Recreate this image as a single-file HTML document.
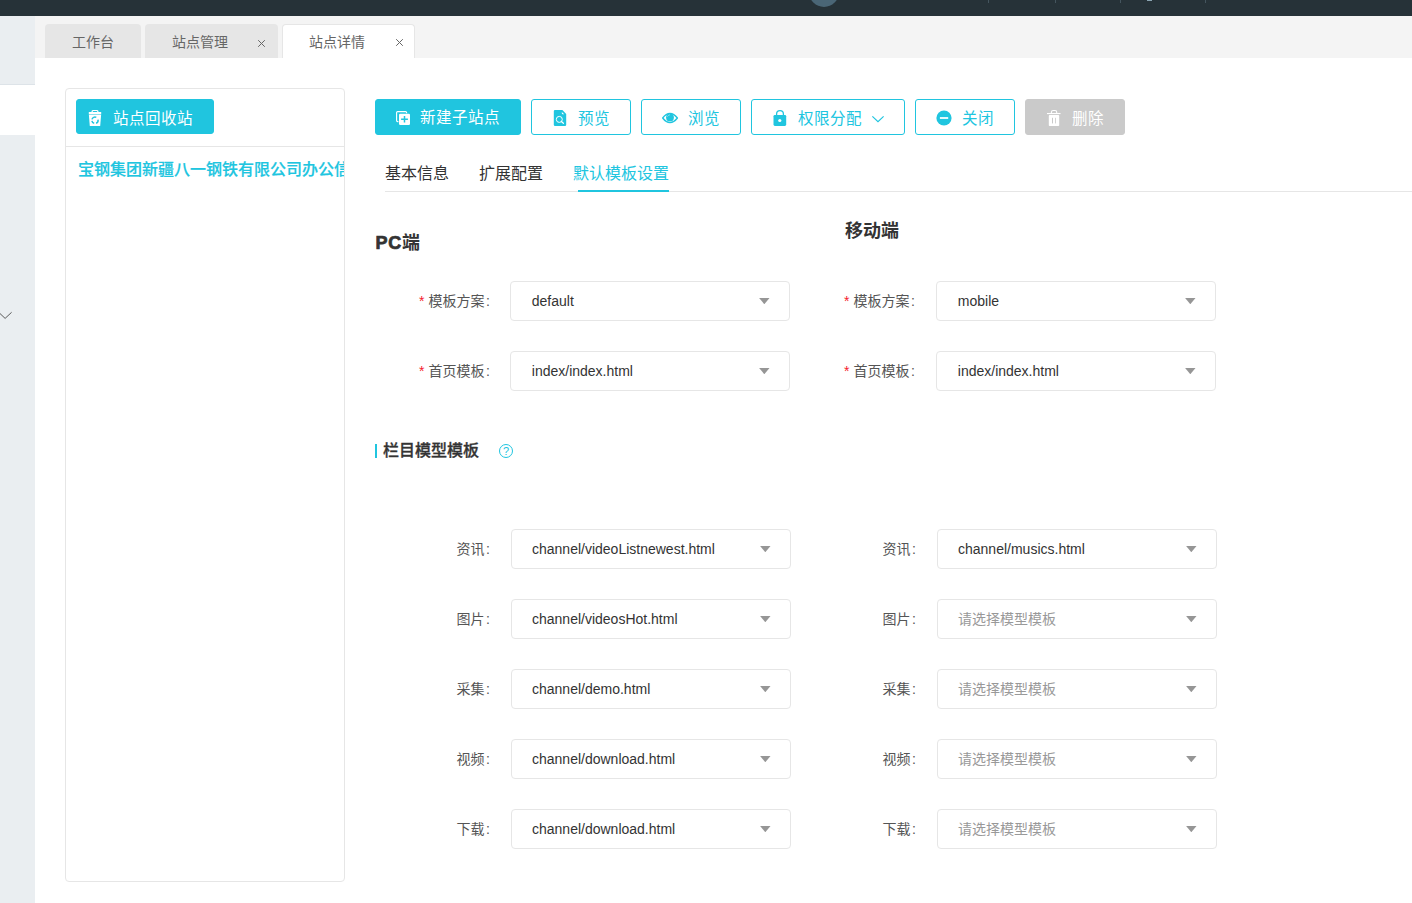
<!DOCTYPE html>
<html lang="zh-CN">
<head>
<meta charset="utf-8">
<title>站点详情</title>
<style>
*{box-sizing:border-box;margin:0;padding:0}
html,body{width:1412px;height:903px;overflow:hidden;background:#fff}
body{font-family:"Liberation Sans","Noto Sans CJK SC",sans-serif;font-size:14px;color:#333;position:relative}
.abs{position:absolute}
#hdr{left:0;top:0;width:1412px;height:16px;background:#263238;overflow:hidden}
#hdr i{position:absolute;top:0;width:1px;height:3px;background:#44555e}
#hdr .av{position:absolute;left:808.6px;top:-22.9px;width:30px;height:30px;border-radius:50%;background:#4a6676}
#side{left:0;top:16px;width:35px;height:887px;background:#eaeef1}
#side .w{position:absolute;left:0;top:68px;width:35px;height:51px;background:#fff;border-top:1px solid #dde3e8}
#tabbar{left:35px;top:16px;width:1377px;height:42px;background:#f4f4f4}
.tab{position:absolute;top:24px;height:34px;border-radius:4px 4px 0 0;background:#e6e6e6;color:#666;font-size:14px;line-height:34px;white-space:nowrap}
.tab.on{background:#fff;border:1px solid #e6e6e6;border-bottom:0}
.tab .t{position:absolute;top:1px}
.tab.on .t{top:0}
.tab .x{position:absolute;top:0;font-size:12px;color:#666}
#lp{left:65px;top:88px;width:280px;height:794px;border:1px solid #e6e6e6;border-radius:4px;overflow:hidden;background:#fff}
#lp .hr{position:absolute;left:0;top:57px;width:100%;height:1px;background:#e6e6e6}
.btn{position:absolute;top:99px;height:36px;border-radius:3px;font-size:16px;line-height:36px;white-space:nowrap;color:#20c5df;border:1px solid #20c5df;background:#fff}
.btn.p{background:#20c5df;color:#fff}
.btn.d{background:#cacaca;border-color:#cacaca;color:#fff}
.btn span{position:absolute;top:0px;font-size:15.5px;letter-spacing:.5px}
.btn svg{position:absolute}
.btn.o span{top:1px}
#tree{left:78px;top:157px;font-size:16px;font-weight:500;-webkit-text-stroke:.2px #20c5df;color:#20c5df;white-space:nowrap;line-height:26px;width:266px;overflow:hidden}
.nav{position:absolute;top:161px;font-size:16px;line-height:26px;color:#333;white-space:nowrap}
.nav.on{color:#20c5df}
#navline{left:385px;top:191px;width:1027px;height:1px;background:#e6e6e6}
#navbar{left:578px;top:190px;width:91px;height:2px;background:#20c5df}
.h3{position:absolute;font-size:18px;font-weight:bold;color:#333;white-space:nowrap;line-height:24px}
.h3 .pc{-webkit-text-stroke:.7px #333;letter-spacing:.8px;margin-left:.5px}
.lab i{font-style:normal;margin-left:1.7px}
.lab{position:absolute;width:120px;text-align:right;font-size:14px;color:#555;line-height:40px;white-space:nowrap}
.lab b{color:#f5222d;font-weight:normal;margin-right:4px}
.sel{position:absolute;width:280px;height:40px;border:1px solid #e6e6e6;border-radius:4px;background:#fff;font-size:14px;line-height:38px;padding-left:20px;color:#333;white-space:nowrap}
.sel.ph{color:#999}
.sel:after{content:"";position:absolute;right:19.5px;top:16px;width:10.4px;height:6.2px;background:#969696;clip-path:polygon(0 0,100% 0,50% 100%)}
#sect{left:375px;top:439px;font-size:16px;font-weight:500;-webkit-text-stroke:.3px #333;color:#333;line-height:24px;padding-left:8px;white-space:nowrap}
#sect:before{content:"";position:absolute;left:0;top:5px;width:2px;height:14px;background:#20c5df}
#q{left:499px;top:444px;width:14px;height:14px;border:1px solid #20c5df;border-radius:50%;color:#20c5df;font-size:11px;line-height:12px;text-align:center}
.sel.u{padding-left:20.8px}
</style>
</head>
<body>
<div id="hdr" class="abs"><div class="av"></div><i style="left:988px"></i><i style="left:1055px"></i><i style="left:1120px"></i><i style="left:1205px"></i><i style="left:1147px;width:5px;height:1px;background:#8aa4b1"></i></div>
<div id="side" class="abs"><div class="w"></div>
<svg class="abs" style="left:0;top:294px" width="14" height="10" viewBox="0 0 14 10"><path d="M-1.2 2.4 L5.1 8.4 L11.6 2.3" fill="none" stroke="#5a5a5a" stroke-width="1"/></svg>
</div>
<div id="tabbar" class="abs"></div>
<div class="tab" style="left:45px;width:96px"><span class="t" style="left:27px">工作台</span></div>
<div class="tab" style="left:145px;width:133px"><span class="t" style="left:27px">站点管理</span></div>
<div class="tab on" style="left:282px;width:133px"><span class="t" style="left:26px">站点详情</span></div>
<svg class="abs" style="left:257.4px;top:38.5px" width="9" height="9" viewBox="0 0 9 9"><path d="M1.2 1.2 L7.8 7.8 M7.8 1.2 L1.2 7.8" stroke="#666" stroke-width="1" fill="none"/></svg><svg class="abs" style="left:394.6px;top:38px" width="9" height="9" viewBox="0 0 9 9"><path d="M1.2 1.2 L7.8 7.8 M7.8 1.2 L1.2 7.8" stroke="#666" stroke-width="1" fill="none"/></svg>

<div id="lp" class="abs"><div class="hr"></div></div>
<div class="btn p" style="left:76px;width:138px;height:35px"><svg style="left:11px;top:10px" width="14" height="16" viewBox="0 0 14 16"><path d="M3.4 2 Q3.4 0 5 0 H9 Q10.6 0 10.6 2 H13.2 V4 H0.8 V2 Z M4.7 2 H9.3 Q9.3 1.1 8.6 1.1 H5.4 Q4.7 1.1 4.7 2 Z" fill="#fff" fill-rule="evenodd"/><path d="M0.9 4.9 H13.1 L12.2 16 H1.8 Z" fill="#fff"/><path d="M0.8 4 H13.2 V4.9 H0.8Z" fill="#fff" opacity=".55"/><g fill="none" stroke="#20c5df" stroke-width="1.5"><path d="M4 9.4 A3.1 3.1 0 0 1 8.3 7.4"/><path d="M10 9.6 A3.1 3.1 0 0 1 8.1 13.2"/><path d="M6.2 13.3 A3.1 3.1 0 0 1 3.9 10.9"/></g></svg><span style="left:36px;top:1px">站点回收站</span></div>
<div id="tree" class="abs">宝钢集团新疆八一钢铁有限公司办公信息</div>

<div class="btn p" style="left:375px;width:146px"><svg style="left:19px;top:10px" width="16" height="16" viewBox="0 0 16 16"><path d="M3.4 11.6 H2.6 Q1.6 11.6 1.6 10.6 V2.6 Q1.6 1.6 2.6 1.6 H10.6 Q11.6 1.6 11.6 2.6 V3.3" fill="none" stroke="#fff" stroke-width="1.15"/><rect x="4" y="3.8" width="11" height="11.2" rx="1.2" fill="#fff"/><path d="M6.1 9.2 H12.9 M9.5 5.9 V12.6" stroke="#20c5df" stroke-width="1.5" fill="none"/></svg><span style="left:44px">新建子站点</span></div>
<div class="btn o" style="left:531px;width:100px"><svg style="left:21px;top:9px" width="15" height="18" viewBox="0 0 15 18"><path d="M2 0.9 H9.4 L13.2 5 V15.8 Q13.2 17 12 17 H2 Q0.8 17 0.8 15.8 V2.1 Q0.8 0.9 2 0.9Z" fill="#20c5df"/><path d="M8.8 2.9 L11.2 5.3 H9.8 Q8.8 5.3 8.8 4.3 Z" fill="#fff"/><circle cx="6.3" cy="10.4" r="3" fill="none" stroke="#fff" stroke-width="1"/><path d="M8.4 12.5 L10.4 14.3" stroke="#fff" stroke-width="1.2" stroke-linecap="round"/></svg><span style="left:46px">预览</span></div>
<div class="btn o" style="left:641px;width:100px"><svg style="left:19px;top:12px" width="18" height="12" viewBox="0 0 18 12"><path d="M1.7 6 Q5 1.5 9 1.5 Q13 1.5 16.4 6 Q13 10.5 9 10.5 Q5 10.5 1.7 6Z" fill="#fff" stroke="#20c5df" stroke-width="1.4" stroke-linejoin="round"/><circle cx="9" cy="5.4" r="3.9" fill="#20c5df"/><path d="M6.4 4.6 Q7.2 3.1 8.9 2.8" stroke="#a5e8f2" stroke-width=".8" fill="none"/></svg><span style="left:46px">浏览</span></div>
<div class="btn o" style="left:751px;width:154px"><svg style="left:21px;top:9px" width="14" height="18" viewBox="0 0 14 18"><path d="M3.6 7 V5 A3.4 3.4 0 0 1 10.4 5 V7" fill="none" stroke="#20c5df" stroke-width="1.3"/><rect x="0.5" y="5.9" width="12.7" height="11.1" rx="1.4" fill="#20c5df"/><circle cx="6.8" cy="11.5" r="1.6" fill="#fff"/></svg><span style="left:46px">权限分配</span><svg style="left:119px;top:15px" width="14" height="9" viewBox="0 0 14 9"><path d="M1.4 1.4 L7 6.6 L12.6 1.4" fill="none" stroke="#20c5df" stroke-width="1.2"/></svg></div>
<div class="btn o" style="left:915px;width:100px"><svg style="left:20px;top:10px" width="16" height="16" viewBox="0 0 16 16"><circle cx="8" cy="8" r="7.6" fill="#20c5df"/><rect x="3.9" y="7" width="8.3" height="2" fill="#e3f8fb"/></svg><span style="left:46px">关闭</span></div>
<div class="btn d o" style="left:1025px;width:100px"><svg style="left:20px;top:9px" width="16" height="18" viewBox="0 0 16 18"><path d="M5.4 5 V3.3 Q5.4 1.5 7.2 1.5 H9 Q10.7 1.5 10.7 3.3 V5" fill="none" stroke="#fff" stroke-width="1.1"/><rect x="1" y="4" width="13.5" height="1.1" fill="#fff"/><rect x="2.8" y="6.1" width="10.4" height="10.9" rx=".8" fill="#fff"/><rect x="6" y="8.8" width="1" height="5.6" fill="#c9c9c9"/><rect x="9" y="8.8" width="1" height="5.6" fill="#d4d4d4"/></svg><span style="left:46px">删除</span></div>

<div class="nav" style="left:385px">基本信息</div>
<div class="nav" style="left:479px">扩展配置</div>
<div class="nav on" style="left:573px">默认模板设置</div>
<div id="navline" class="abs"></div><div id="navbar" class="abs"></div>

<div class="h3" style="left:375px;top:231px"><span class="pc">PC</span>端</div>
<div class="h3" style="left:845px;top:219px">移动端</div>

<div class="lab" style="left:370px;top:281px"><b>*</b>模板方案<i>:</i></div><div class="sel u" style="left:510px;top:281px">default</div>
<div class="lab" style="left:370px;top:351px"><b>*</b>首页模板<i>:</i></div><div class="sel u" style="left:510px;top:351px">index/index.html</div>
<div class="lab" style="left:795px;top:281px"><b>*</b>模板方案<i>:</i></div><div class="sel u" style="left:936px;top:281px">mobile</div>
<div class="lab" style="left:795px;top:351px"><b>*</b>首页模板<i>:</i></div><div class="sel u" style="left:936px;top:351px">index/index.html</div>

<div id="sect" class="abs">栏目模型模板</div>
<div id="q" class="abs">?</div>

<div class="lab" style="left:370px;top:529px">资讯<i>:</i></div><div class="sel" style="left:511px;top:529px">channel/videoListnewest.html</div>
<div class="lab" style="left:370px;top:599px">图片<i>:</i></div><div class="sel" style="left:511px;top:599px">channel/videosHot.html</div>
<div class="lab" style="left:370px;top:669px">采集<i>:</i></div><div class="sel" style="left:511px;top:669px">channel/demo.html</div>
<div class="lab" style="left:370px;top:739px">视频<i>:</i></div><div class="sel" style="left:511px;top:739px">channel/download.html</div>
<div class="lab" style="left:370px;top:809px">下载<i>:</i></div><div class="sel" style="left:511px;top:809px">channel/download.html</div>

<div class="lab" style="left:796px;top:529px">资讯<i>:</i></div><div class="sel" style="left:937px;top:529px">channel/musics.html</div>
<div class="lab" style="left:796px;top:599px">图片<i>:</i></div><div class="sel ph" style="left:937px;top:599px">请选择模型模板</div>
<div class="lab" style="left:796px;top:669px">采集<i>:</i></div><div class="sel ph" style="left:937px;top:669px">请选择模型模板</div>
<div class="lab" style="left:796px;top:739px">视频<i>:</i></div><div class="sel ph" style="left:937px;top:739px">请选择模型模板</div>
<div class="lab" style="left:796px;top:809px">下载<i>:</i></div><div class="sel ph" style="left:937px;top:809px">请选择模型模板</div>
</body>
</html>
